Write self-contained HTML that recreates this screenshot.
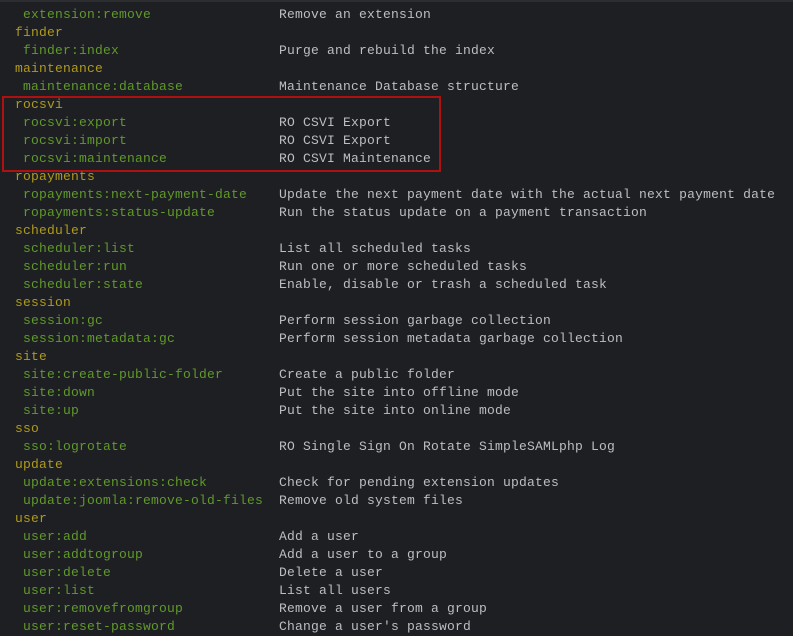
<!DOCTYPE html><html><head><style>
body{margin:0;background:#1e1f22;width:793px;height:635px;overflow:hidden;position:relative;font-family:"Liberation Mono",monospace;font-size:13px;letter-spacing:0.2px}
.top{position:absolute;left:0;right:0;top:0;height:2px;background:#2b2d30}
.l{position:absolute;height:18px;line-height:18px;white-space:pre}
.g{left:15px;color:#b09a1c}
.c{left:23px;color:#5f9a2a}
.d{left:279px;color:#bcbec4}
.box{position:absolute;left:2px;top:96px;width:435px;height:72px;border:2px solid #b01010}
</style></head><body><div class="top"></div>
<div class="box"></div>
<div id="r"></div>
<script>
const rows=[["c","extension:remove","Remove an extension"],["g","finder"],["c","finder:index","Purge and rebuild the index"],["g","maintenance"],["c","maintenance:database","Maintenance Database structure"],["g","rocsvi"],["c","rocsvi:export","RO CSVI Export"],["c","rocsvi:import","RO CSVI Export"],["c","rocsvi:maintenance","RO CSVI Maintenance"],["g","ropayments"],["c","ropayments:next-payment-date","Update the next payment date with the actual next payment date"],["c","ropayments:status-update","Run the status update on a payment transaction"],["g","scheduler"],["c","scheduler:list","List all scheduled tasks"],["c","scheduler:run","Run one or more scheduled tasks"],["c","scheduler:state","Enable, disable or trash a scheduled task"],["g","session"],["c","session:gc","Perform session garbage collection"],["c","session:metadata:gc","Perform session metadata garbage collection"],["g","site"],["c","site:create-public-folder","Create a public folder"],["c","site:down","Put the site into offline mode"],["c","site:up","Put the site into online mode"],["g","sso"],["c","sso:logrotate","RO Single Sign On Rotate SimpleSAMLphp Log"],["g","update"],["c","update:extensions:check","Check for pending extension updates"],["c","update:joomla:remove-old-files","Remove old system files"],["g","user"],["c","user:add","Add a user"],["c","user:addtogroup","Add a user to a group"],["c","user:delete","Delete a user"],["c","user:list","List all users"],["c","user:removefromgroup","Remove a user from a group"],["c","user:reset-password","Change a user's password"]];
let h="";rows.forEach((r,i)=>{const t=6+i*18;h+=`<div class="l ${r[0]}" style="top:${t}px">${r[1]}</div>`;if(r[2])h+=`<div class="l d" style="top:${t}px">${r[2].replace(/'/g,"&#39;")}</div>`;});
document.getElementById("r").innerHTML=h;
</script></body></html>
